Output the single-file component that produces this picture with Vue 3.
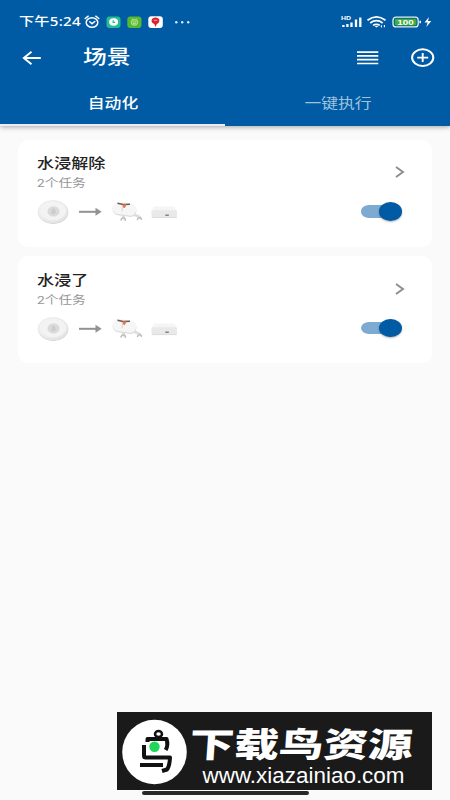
<template>
  <div class="screen">
    <header class="header">
      <div class="status-bar">
        <span class="clock">下午5:24</span>
        <svg class="status-icons" width="106" height="16" viewBox="0 0 106 16">
          <g fill="none" stroke="#fff" stroke-width="1.5" stroke-linecap="round">
            <ellipse cx="8" cy="8.5" rx="5.8" ry="4.8" />
            <path d="M1.2 4.5 4.2 2.2M14.8 4.5 11.8 2.2M5.8 7.8 8 9.7 10.8 7.5" />
          </g>
          <rect x="22.500" y="2.500" width="14" height="11.500" rx="3" fill="#23bd91" />
          <ellipse cx="29.600" cy="8" rx="4.500" ry="3.700" fill="#fff" />
          <path d="M29.200 6.300v2.100h2" fill="none" stroke="#23bd91" stroke-width="1.200" />
          <rect x="43.300" y="2.500" width="14.200" height="11.500" rx="3" fill="#53b932" />
          <ellipse cx="50.400" cy="8.300" rx="3.300" ry="3" fill="#79c94d" stroke="#c5e6a2" stroke-width=".8" />
          <path d="M48 5.300v-.8M52.800 5.300v-.8M49 7.600h.8M51.200 7.600h.8M49 9.300q1.400 1 2.800 0" fill="none" stroke="#d8efbd" stroke-width=".8" />
          <rect x="64.300" y="2.300" width="14.500" height="11.700" rx="3" fill="#fff" />
          <path d="M71.500 13 70.300 10C66 7.800 67.200 3.400 71.500 3.400s5.500 4.400 1.300 6.600z" fill="#d9222d" />
          <path d="M69.800 6.300h3.500" stroke="#f4a6a6" stroke-width="1" />
          <g fill="#dcecf7">
            <circle cx="92.300" cy="8.300" r="1.200" /><circle cx="98.200" cy="8.300" r="1.200" /><circle cx="104.200" cy="8.300" r="1.200" />
          </g>
        </svg>
        <svg class="system-icons" width="94" height="18" viewBox="0 0 94 18">
          <text x="2" y="7" class="hd" textLength="10" lengthAdjust="spacingAndGlyphs">HD</text>
          <path d="M4.400 14v-2M8.400 14v-3M12.500 14V9.500M17 14V6.500M21.300 14V4.500" stroke="#fff" stroke-width="2.300" />
          <g fill="none" stroke="#fff" stroke-width="1.700">
            <path d="M28.500 7.300q9-6.800 18 0M31.200 10q6.300-4.600 12.500 0M34 12.400q3.400-2.300 6.800 0" />
          </g>
          <path d="m35.200 12.700 2.300 1.800 2.300-1.800z" fill="#fff" />
          <path d="M42.400 14.500v-2.300M45.400 12v2.300" stroke="#fff" stroke-width="1.100" />
          <rect x="54" y="4.200" width="25.200" height="9.700" rx="3" fill="none" stroke="#e5f1e9" stroke-width="1.300" />
          <rect x="55.800" y="5.700" width="21.600" height="6.700" rx="1.300" fill="#43ae33" />
          <path d="M81.200 7.700v2.600" stroke="#fff" stroke-width="1.500" />
          <text x="58.300" y="12" class="battery-text" textLength="16.500" lengthAdjust="spacingAndGlyphs">100</text>
          <path d="m90 4-4.500 5.400h3.100l-1.300 4.600 5-6h-3.300z" fill="#fff" />
        </svg>
      </div>

      <div class="toolbar">
        <svg class="back" width="20" height="16" viewBox="0 0 20 16">
          <path d="M18.800 8H2M9.500 1.800 1.800 8l7.700 6.200" fill="none" stroke="#fff" stroke-width="1.900" />
        </svg>
        <h1 class="title">场景</h1>
        <svg class="menu" width="22" height="14" viewBox="0 0 22 14">
          <path d="M0 1.100h21.300M0 4.900h21.300M0 8.700h21.300M0 12.500h21.300" stroke="#fff" stroke-width="1.700" />
        </svg>
        <svg class="add" width="24" height="20" viewBox="0 0 24 20">
          <ellipse cx="11.700" cy="9.600" rx="10.600" ry="8.300" fill="none" stroke="#fff" stroke-width="2" />
          <path d="M6.200 9.600h11M11.700 5.100v9" stroke="#fff" stroke-width="1.900" />
        </svg>
      </div>

      <nav class="tabs">
        <button
          v-for="(tab, index) in tabs"
          :key="tab"
          class="tab"
          :class="{ active: index === currentTab }"
          @click="currentTab = index"
        >
          <span>{{ tab }}</span>
        </button>
      </nav>
    </header>

    <main class="list">
      <section v-for="scene in scenes" :key="scene.name" class="card">
        <div class="card-info">
          <h2 class="name">{{ scene.name }}</h2>
          <p class="tasks">{{ scene.tasks }}个任务</p>
          <svg class="devices" width="142" height="28" viewBox="0 0 142 28">
            <defs>
              <linearGradient id="disc" x1="0" y1="0" x2="1" y2="1">
                <stop offset="0" stop-color="#f5f5f5" />
                <stop offset="1" stop-color="#e2e2e2" />
              </linearGradient>
            </defs>
            <!-- water leak sensor -->
            <ellipse cx="16.300" cy="14.600" rx="15" ry="11.300" fill="#d0d0d0" />
            <ellipse cx="16" cy="13.800" rx="15" ry="11.200" fill="url(#disc)" stroke="#e2e2e2" stroke-width=".6" />
            <ellipse cx="16" cy="12.800" rx="13" ry="9.400" fill="#f3f3f3" />
            <ellipse cx="16.500" cy="13.400" rx="6" ry="5.200" fill="#dadada" />
            <path d="M16.500 10.700q-3.200 4.200 0 5.200 3.200-1 0-5.200z" fill="#d0d0d0" stroke="#bcbcbc" stroke-width=".6" />
            <!-- arrow -->
            <path d="M42 13.800h18" stroke="#929292" stroke-width="2" />
            <path d="m58.500 9.800 6.200 4-6.200 4z" fill="#929292" />
            <!-- valve controller -->
            <g stroke-linecap="round" fill="none">
              <path d="M86.500 16v4M96 16l6.500 3" stroke="#dedede" stroke-width="3" />
              <path d="M84 22q.5-2.300 2.600-2t1.700 2.300M100.500 21.600q.5-2 2.300-1.800t1.500 1.500" stroke="#bdbdbd" stroke-width="1.500" />
            </g>
            <rect x="75.500" y="5.500" width="24" height="12.500" rx="6.200" fill="#dcdcdc" transform="rotate(8 87 12)" />
            <rect x="75.500" y="4.600" width="23.700" height="12.200" rx="6" fill="#f6f6f6" transform="rotate(8 87 11)" />
            <path d="m80.500 5.300 5.500 1.200 7-.3" fill="none" stroke="#715850" stroke-width="1.500" />
            <path d="m85.500 7 3.500-.2-1.700 3.200z" fill="#e77739" stroke="#df7e4e" stroke-width="1" />
            <path d="m85.500 7.200-.4 6" stroke="#d8c7bf" stroke-width=".8" />
            <!-- gateway -->
            <path d="M117 8.500h20.500l2.300 4.500H114.500z" fill="#f5f5f5" />
            <rect x="114.500" y="12.200" width="25.500" height="7.800" rx="1" fill="#e9e9e9" />
            <path d="M115 19.600h24.500" stroke="#d9d9d9" stroke-width=".8" />
            <path d="M128.300 17.200h3.500" stroke="#727272" stroke-width="1.300" />
          </svg>
        </div>
        <div class="card-actions">
          <svg class="chevron" width="10" height="12" viewBox="0 0 10 12">
            <path d="m1 1 7 5-7 5" fill="none" stroke="#8c8c8c" stroke-width="1.900" />
          </svg>
          <button class="switch" :class="{ on: scene.enabled }" @click="scene.enabled = !scene.enabled">
            <span class="knob"></span>
          </button>
        </div>
      </section>
    </main>

    <footer class="footer">
      <svg class="banner" width="315" height="78" viewBox="0 0 315 78">
        <rect width="315" height="78" fill="#1a1a1a" />
        <circle cx="37.500" cy="40" r="32.300" fill="#fff" />
        <g fill="none" stroke="#111" stroke-width="4" stroke-linejoin="round">
          <ellipse cx="41.500" cy="22" rx="3.500" ry="3" stroke-width="2.500" />
          <path d="M30.500 30V27h19q2 6-.8 11" />
          <path d="M27 33v11q0 1.500 2 1.500H53q-.5 9-3 12l-5 1.500M23 53h23" />
        </g>
        <circle cx="37.500" cy="34.700" r="5.200" fill="#20d65b" />
        <text x="75" y="45" class="banner-title" textLength="223" lengthAdjust="spacingAndGlyphs">下载鸟资源</text>
        <text x="85.500" y="71" class="banner-url" textLength="202" lengthAdjust="spacingAndGlyphs">www.xiazainiao.com</text>
      </svg>
      <div class="home-bar"></div>
    </footer>
  </div>
</template>

<script setup>
import { ref } from "vue";

const tabs = ["自动化", "一键执行"];
const currentTab = ref(0);

const scenes = ref([
  { name: "水浸解除", tasks: 2, enabled: true },
  { name: "水浸了", tasks: 2, enabled: true },
]);
</script>

<style>
body {
  margin: 0;
  background: #fafafa;
}
</style>

<style scoped>
.screen {
  width: 450px;
  height: 800px;
  display: flex;
  flex-direction: column;
  overflow: hidden;
  background: #fafafa;
  font-family: Roboto, "Noto Sans CJK SC", sans-serif;
}

button {
  padding: 0;
  border: none;
  background: none;
  font-family: inherit;
  cursor: pointer;
}

svg {
  display: block;
  flex: none;
}

.header {
  height: 125.5px;
  flex: none;
  background: #005ba4;
  color: #fff;
  box-shadow: 0 1px 5px rgba(0, 0, 0, 0.35);
}

.status-bar {
  height: 36px;
  padding: 8px 17px 0 18.5px;
  box-sizing: border-box;
  display: flex;
  align-items: center;
}

.clock {
  width: 65.5px;
  font-size: 12.5px;
  line-height: 18px;
  font-weight: 500;
  letter-spacing: 0.2px;
  white-space: nowrap;
  font-family: "Noto Sans", "Noto Sans CJK SC", sans-serif;
  transform: scaleX(1.21);
  transform-origin: left;
}

.system-icons {
  margin-left: auto;
}

.hd {
  fill: #fff;
  font: bold 6px "Liberation Sans", sans-serif;
}

.battery-text {
  fill: #fff;
  font: bold 8px "Liberation Sans", sans-serif;
}

.toolbar {
  height: 44px;
  padding: 0 15px 0 22px;
  display: flex;
  align-items: center;
}

.title {
  margin: 0 auto 0 41px;
  font-size: 19.5px;
  line-height: 28px;
  font-weight: 500;
  transform: scaleX(1.22);
  transform-origin: left;
}

.menu {
  margin-right: 32px;
}

.tabs {
  height: 45.5px;
  display: flex;
}

.tab {
  flex: 1;
  padding-top: 2px;
  box-sizing: border-box;
  border-bottom: 2px solid transparent;
  color: #9fc3df;
  font-size: 14px;
  line-height: 20px;
}

.tab.active {
  color: #fff;
  font-weight: 500;
  border-bottom-color: #e6edf3;
}

.tab span {
  display: inline-block;
  transform: scaleX(1.2);
}

.list {
  flex: 1;
  padding: 14px 18px 0;
  display: flex;
  flex-direction: column;
  gap: 9.5px;
}

.card {
  height: 107px;
  padding: 13.5px 30px 0 19px;
  box-sizing: border-box;
  display: flex;
  justify-content: space-between;
  border-radius: 10px;
  background: #fff;
}

.name {
  margin: 0;
  font-size: 14px;
  line-height: 20px;
  font-weight: 500;
  color: #222;
  transform: scaleX(1.22);
  transform-origin: left;
}

.tasks {
  margin: 2px 0 0;
  font-size: 11.5px;
  line-height: 17px;
  color: #969696;
  transform: scaleX(1.19);
  transform-origin: left;
}

.devices {
  margin-top: 6px;
}

.card-actions {
  display: flex;
  flex-direction: column;
  align-items: flex-end;
}

.chevron {
  margin: 13px -3px 0 0;
}

.switch {
  width: 41.5px;
  height: 19px;
  margin-top: 24px;
  display: flex;
  align-items: center;
  border-radius: 10px;
  background: linear-gradient(#c4c4c4, #c4c4c4) center / 41px 12.5px no-repeat;
}

.switch.on {
  justify-content: flex-end;
  background: none;
}

.switch.on::before {
  content: "";
  width: 34px;
  height: 12.5px;
  margin-right: -16px;
  border-radius: 8px / 6px;
  background: #7daad1;
}

.knob {
  width: 23px;
  height: 18.5px;
  border-radius: 50%;
  background: #fff;
  box-shadow: 0 1px 2px rgba(0, 0, 0, 0.3);
}

.switch.on .knob {
  background: #005ba4;
}

.footer {
  height: 88px;
  flex: none;
  display: flex;
  flex-direction: column;
}

.banner {
  margin-left: 117px;
}

.banner-title {
  fill: #fff;
  font: 900 34px "Noto Sans CJK SC", sans-serif;
  transform: skewX(-4deg);
}

.banner-url {
  fill: #fff;
  font: 22px "Liberation Sans", sans-serif;
}

.home-bar {
  width: 167px;
  height: 4px;
  margin: 1px auto 0;
  border-radius: 2px;
  background: #29292b;
}
</style>
